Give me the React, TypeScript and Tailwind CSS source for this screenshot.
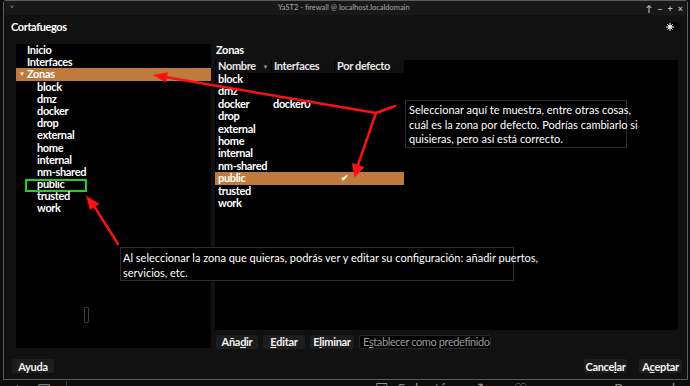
const UI = "font-['Lato',sans-serif]";

const zones = ["block", "dmz", "docker", "drop", "external", "home", "internal", "nm-shared", "public", "trusted", "work"];

function Btn({ children, w }: { children: React.ReactNode; w: string }) {
  return (
    <div className={`${w} h-[14px] rounded-[2px] bg-[#1d1d1d] flex items-center justify-center whitespace-nowrap text-[11px] font-bold tracking-[-0.3px] leading-none text-[#f2f2f2]`}>
      {children}
    </div>
  );
}

function Arrows() {
  return (
    <svg className="absolute left-0 top-0 pointer-events-none" width="690" height="386" viewBox="0 0 690 386">
      <g stroke="#ff1010" strokeWidth="2.4" strokeLinecap="round" fill="none">
        <path d="M395 106 L376 113" />
        <path d="M376 113 L165 77" />
        <path d="M376 113 L358 165" />
        <path d="M118 244 L94 206" />
      </g>
      <g fill="#ff1010">
        <polygon points="153,75 166,82.5 167.8,72.3" />
        <polygon points="354.5,177.5 364.5,167 352,163" />
        <polygon points="86,195.5 99.5,204 90,210" />
      </g>
    </svg>
  );
}

export default function App() {
  return (
    <div className={`relative w-[690px] h-[386px] overflow-hidden bg-[#0c0c0c] ${UI}`}>
      <div className="ml-[3px] w-[685px] h-[380px] flex flex-col border border-[#5c5c5c] rounded-t-[3px] bg-[#111111]">
        {/* title bar */}
        <div className="h-[14px] flex items-center bg-[#181818] text-[#a8a8a8] text-[7.5px] leading-none whitespace-nowrap">
          <span className="w-[18px] pl-[6px] text-[8px]">˅</span>
          <span className="flex-1 text-center pl-[20px]">YaST2 - firewall @ localhost.localdomain</span>
          <span className="flex gap-[5px] pr-[4px] text-[9px] font-bold text-[#bdbdbd]">
            <span>↑</span>
            <span>–</span>
            <span>+</span>
            <span>×</span>
          </span>
        </div>

        {/* heading */}
        <div className="h-[29px] flex justify-between items-start pt-[6px] pl-[7px] pr-[4px]">
          <span className="text-[11px] font-bold tracking-[-0.4px] text-white leading-[12px]">Cortafuegos</span>
          <svg width="16" height="12" viewBox="0 0 16 12" className="mr-[2px]">
            <circle cx="10" cy="6" r="5" fill="#000" />
            <g stroke="#fff" strokeWidth="1" strokeLinecap="round">
              <path d="M5 2.5 V9.5 M1.5 6 H8.5 M2.6 3.6 L7.4 8.4 M7.4 3.6 L2.6 8.4" />
            </g>
            <circle cx="5" cy="6" r="1.8" fill="#fff" />
          </svg>
        </div>

        {/* main */}
        <div className="flex h-[305px] pl-[12px] gap-[4px]">
          <div className="relative w-[195px] h-[304px] bg-black text-[11px] font-bold tracking-[-0.35px] text-white whitespace-nowrap">
            <div className="h-[12.2px] leading-[12.2px] pl-[11px]">Inicio</div>
            <div className="h-[12.2px] leading-[12.2px] pl-[11px]">Interfaces</div>
            <div className="h-[12.2px] leading-[12.2px] bg-[#c07b3c] flex items-center">
              <span className="w-[11px] pl-[3px] text-[6px]">▼</span>
              <span>Zonas</span>
            </div>
            {zones.map((z) => (
              <div key={z} className="relative h-[12.2px] leading-[12.2px] pl-[21px]">
                {z}
                {z === "public" && (
                  <span className="absolute left-[9px] top-[0.5px] w-[62px] h-[13.5px] border-2 border-[#22d022]" />
                )}
              </div>
            ))}
            <span className="absolute left-[68px] top-[263px] w-[5px] h-[16px] rounded-[1px] border border-[#3a3a3a]" />
          </div>

          <div className="w-[463px] flex flex-col">
            <div className="h-[15.5px] pl-[1px] text-[11px] font-bold tracking-[-0.3px] text-white leading-[12px]">Zonas</div>
            <div className="h-[270px] bg-black text-[11px] font-bold tracking-[-0.35px] text-white whitespace-nowrap">
              <div className="h-[13.5px] flex gap-[1px] pl-[1px] bg-black">
                <div className="w-[55px] bg-[#101010] pl-[2px] flex items-center justify-between pr-[3px] text-[#e6e6e6]">
                  <span>Nombre</span>
                  <span className="text-[6px] text-[#9a9a9a]">▼</span>
                </div>
                <div className="w-[62px] bg-[#101010] pl-[2px] flex items-center text-[#e6e6e6]">Interfaces</div>
                <div className="w-[69px] bg-[#101010] pl-[2px] flex items-center text-[#e6e6e6]">Por defecto</div>
              </div>
              {zones.map((z) => (
                <div
                  key={z}
                  className={`h-[12.4px] leading-[12.4px] flex w-[189px] ${z === "public" ? "bg-[#c07b3c]" : ""}`}
                >
                  <span className="w-[57px] pl-[3px]">{z}</span>
                  <span className="w-[66px] pl-[1px]">{z === "docker" ? "docker0" : ""}</span>
                  <span className="pl-[3px] text-[9px]">{z === "public" ? "✔" : ""}</span>
                </div>
              ))}
            </div>
            <div className="mt-[5px] flex gap-[5px] pl-[1px]">
              <Btn w="w-[42px]">Aña<u>d</u>ir</Btn>
              <Btn w="w-[42px]"><u>E</u>ditar</Btn>
              <Btn w="w-[44px]">E<u>l</u>iminar</Btn>
              <div className="w-[132px] h-[14px] rounded-[2px] bg-black border border-[#262626] flex items-center pl-[3px] whitespace-nowrap text-[11px] tracking-[-0.4px] leading-none text-[#9a9a9a]">
                E<u>s</u>tablecer como predefinido
              </div>
            </div>
          </div>
        </div>

        {/* footer */}
        <div className="mt-[10px] flex justify-between pl-[8px] pr-[5px]">
          <Btn w="w-[42px]">Ayuda</Btn>
          <div className="flex gap-[12px]">
            <Btn w="w-[43px]">Cance<u>l</u>ar</Btn>
            <Btn w="w-[43px]">A<u>c</u>eptar</Btn>
          </div>
        </div>
      </div>

      {/* page strip below the window */}
      <div className="h-[10px] flex items-start whitespace-nowrap text-[15px] leading-[15px] text-[#8c8c8c] font-['Open_Sans',sans-serif] pt-[1px]">
        <span className="w-[13px]" />
        <span className="w-[24px]">+</span>
        <span className="w-[29px]">▤</span>
        <span className="w-[1px] h-[10px] bg-[#3a3a3a]" />
        <span className="w-[309px]" />
        <span className="w-[22px]">☑</span>
        <span className="w-[80px]">Solución</span>
        <span className="w-[37px]">↻</span>
        <span className="w-[33px]">♡</span>
        <span className="w-[45px]">•••</span>
        <span className="w-[22px]">●</span>
        <span>Responder</span>
      </div>

      {/* annotations */}
      <div className="absolute left-[405px] top-[100px] w-[222px] h-[48px] bg-black border border-[#2c2c2c] pl-[3px] pt-[2px] whitespace-nowrap text-[11px] leading-[14.5px] text-white">
        Seleccionar aquí te muestra, entre otras cosas,
        <br />
        cuál es la zona por defecto. Podrías cambiarlo si
        <br />
        quisieras, pero así está correcto.
      </div>
      <div className="absolute left-[120px] top-[247px] w-[394px] h-[34px] bg-black border border-[#2c2c2c] pl-[2px] pt-[2px] whitespace-nowrap text-[11px] leading-[15px] text-white">
        Al seleccionar la zona que quieras, podrás ver y editar su configuración: añadir puertos,
        <br />
        servicios, etc.
      </div>

      <Arrows />
    </div>
  );
}
